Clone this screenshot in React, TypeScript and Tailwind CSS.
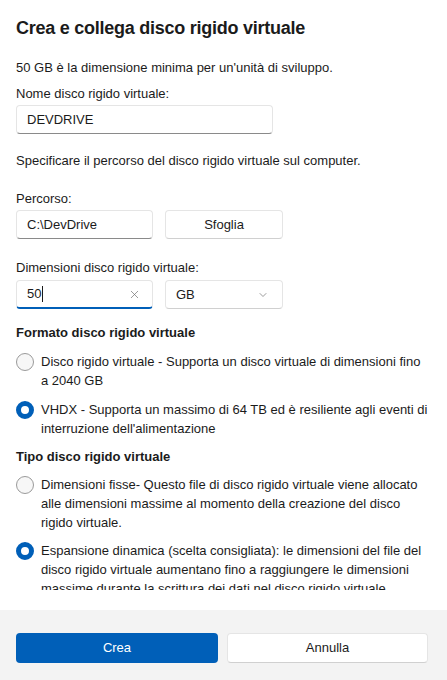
import React from "react";
import { ChevronDown, X } from "lucide-react";

function Radio({ checked, lines }: { checked: boolean; lines: string[] }) {
  return (
    <div className="flex items-start">
      <div
        className={
          checked
            ? "mt-[1px] h-[18px] w-[18px] shrink-0 rounded-full border-[5px] border-[#005fb8] bg-white"
            : "mt-[1px] h-[18px] w-[18px] shrink-0 rounded-full border border-[#9a9a9a] bg-[#f7f7f7]"
        }
      />
      <div className="ml-[7px] whitespace-nowrap text-[13px] leading-[19px]">
        {lines.map((l, i) => (
          <div key={i}>{l}</div>
        ))}
      </div>
    </div>
  );
}

export default function App() {
  return (
    <div className="flex h-[680px] w-[447px] flex-col overflow-hidden bg-white font-['Liberation_Sans',Arial,sans-serif] text-[#1b1b1b]">
      <div className="flex min-h-0 flex-1 flex-col pb-[20px]">
        <div className="min-h-0 flex-1 overflow-hidden px-4">
          <div className="mt-[14px] text-[18px] font-semibold leading-[28px] tracking-[-0.25px]">
            Crea e collega disco rigido virtuale
          </div>
          <div className="mt-[16px] text-[13px] leading-[20px]">
            50 GB è la dimensione minima per un'unità di sviluppo.
          </div>
          <div className="mt-[6px] text-[13px] leading-[20px]">Nome disco rigido virtuale:</div>
          <div className="mt-[1px] flex h-[29px] w-[257px] items-center rounded-[4px] border border-[#e5e5e5] border-b-[#8a8a8a] bg-white px-[10px] text-[13px]">
            DEVDRIVE
          </div>
          <div className="mt-[17px] text-[13px] leading-[20px]">
            Specificare il percorso del disco rigido virtuale sul computer.
          </div>
          <div className="mt-[18px] text-[13px] leading-[20px]">Percorso:</div>
          <div className="mt-[1px] flex gap-[12px]">
            <div className="flex h-[29px] w-[137px] items-center rounded-[4px] border border-[#e5e5e5] border-b-[#8a8a8a] bg-white px-[10px] text-[13px]">
              C:\DevDrive
            </div>
            <div className="flex h-[29px] w-[118px] items-center justify-center rounded-[4px] border border-[#e5e5e5] border-b-[#d0d0d0] bg-white text-[13px]">
              Sfoglia
            </div>
          </div>
          <div className="mt-[19px] text-[13px] leading-[20px]">Dimensioni disco rigido virtuale:</div>
          <div className="mt-[2px] flex gap-[12px]">
            <div className="flex h-[29px] w-[137px] items-center rounded-[4px] border border-[#e5e5e5] border-b-2 border-b-[#005fb8] bg-white pl-[10px] pr-[11px] text-[13px]">
              <span>50</span>
              <span className="ml-[1px] h-[16px] w-[1px] bg-[#1b1b1b]" />
              <span className="flex-1" />
              <X size={13} strokeWidth={1.25} className="text-[#6b6b6b]" />
            </div>
            <div className="flex h-[29px] w-[118px] items-center rounded-[4px] border border-[#e5e5e5] border-b-[#d0d0d0] bg-white pl-[10px] pr-[13px] text-[13px]">
              <span className="flex-1">GB</span>
              <ChevronDown size={12} strokeWidth={1.25} className="text-[#5f5f5f]" />
            </div>
          </div>
          <div className="mt-[14px] text-[13px] font-semibold leading-[20px]">
            Formato disco rigido virtuale
          </div>
          <div className="mt-[9px]">
            <Radio
              checked={false}
              lines={[
                "Disco rigido virtuale - Supporta un disco virtuale di dimensioni fino",
                "a 2040 GB",
              ]}
            />
          </div>
          <div className="mt-[10px]">
            <Radio
              checked={true}
              lines={[
                "VHDX - Supporta un massimo di 64 TB ed è resiliente agli eventi di",
                "interruzione dell'alimentazione",
              ]}
            />
          </div>
          <div className="mt-[9px] text-[13px] font-semibold leading-[20px]">
            Tipo disco rigido virtuale
          </div>
          <div className="mt-[8px]">
            <Radio
              checked={false}
              lines={[
                "Dimensioni fisse- Questo file di disco rigido virtuale viene allocato",
                "alle dimensioni massime al momento della creazione del disco",
                "rigido virtuale.",
              ]}
            />
          </div>
          <div className="mt-[9px]">
            <Radio
              checked={true}
              lines={[
                "Espansione dinamica (scelta consigliata): le dimensioni del file del",
                "disco rigido virtuale aumentano fino a raggiungere le dimensioni",
                "massime durante la scrittura dei dati nel disco rigido virtuale.",
              ]}
            />
          </div>
        </div>
      </div>
      <div className="flex h-[70px] shrink-0 gap-[9px] bg-[#f3f3f3] px-4 pt-[23px]">
        <div className="flex h-[30px] w-[202px] items-center justify-center rounded-[4px] bg-[#005fb8] text-[13px] text-white">
          Crea
        </div>
        <div className="flex h-[30px] w-[201px] items-center justify-center rounded-[4px] border border-[#e5e5e5] border-b-[#d0d0d0] bg-white text-[13px]">
          Annulla
        </div>
      </div>
    </div>
  );
}
